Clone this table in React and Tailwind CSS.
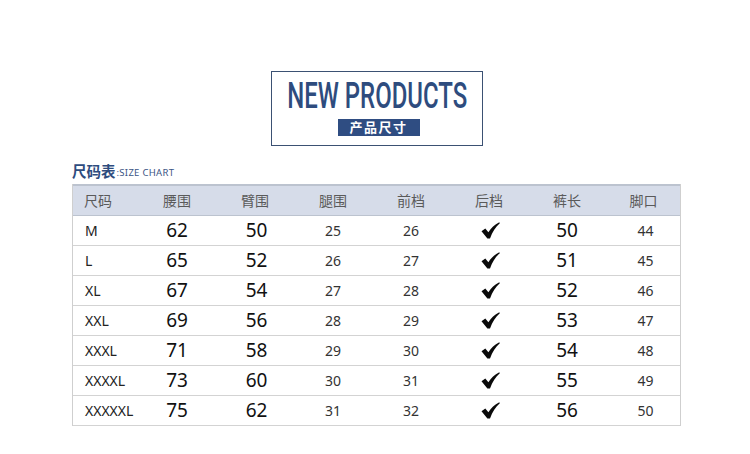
import React from "react";

const rows = [
  ["M", 62, 50, 25, 26, 50, 44],
  ["L", 65, 52, 26, 27, 51, 45],
  ["XL", 67, 54, 27, 28, 52, 46],
  ["XXL", 69, 56, 28, 29, 53, 47],
  ["XXXL", 71, 58, 29, 30, 54, 48],
  ["XXXXL", 73, 60, 30, 31, 55, 49],
  ["XXXXXL", 75, 62, 31, 32, 56, 50],
];

const heads = ["尺码", "腰围", "臂围", "腿围", "前档", "后档", "裤长", "脚口"];

const grid =
  "grid grid-cols-[65px_78px_78px_78px_78px_78px_78px_75px] items-center";

function Check() {
  return (
    <svg width="19" height="17" viewBox="0 0 19 17">
      <path
        d="M0.5 9.2 L4.3 6.6 L7.4 10.2 C10 6 13.6 2.6 18.3 0.2 L18.8 1.2 C14.6 4.8 11.4 9.6 9 16.6 L6.4 16.6 Z"
        fill="#0a0a0a"
      />
    </svg>
  );
}

export default function App() {
  return (
    <div
      className="w-[750px] h-[454px] bg-white overflow-hidden"
      style={{ fontFamily: '"Noto Sans", "Noto Sans CJK SC", sans-serif' }}
    >
      <div className="pt-[71px] pl-[271px]">
        <div className="w-[212px] h-[75px] border-[1.5px] border-[#3b5173] flex flex-col items-center">
          <div className="h-[42px] flex items-end justify-center w-full">
            <span
              className="inline-block text-[36px] leading-[36px] font-medium text-[#2e4c7e] scale-x-[0.665] whitespace-nowrap"
              style={{ fontFamily: "Roboto, sans-serif" }}
            >
              NEW PRODUCTS
            </span>
          </div>
          <div className="mt-[5px] ml-[3px] w-[82px] h-[17px] bg-[#2f4d82] flex items-center justify-center text-white text-[13px] font-bold tracking-[1.5px] leading-none">
            产品尺寸
          </div>
        </div>
      </div>

      <div className="ml-[72px] mt-[18px] flex items-end h-[14px]">
        <span className="text-[14.5px] leading-none font-bold text-[#2e4c7e]">
          尺码表
        </span>
        <span className="text-[9.5px] leading-none text-[#3b5584] ml-[1px] mb-[1px] tracking-[0.3px]">
          :SIZE CHART
        </span>
      </div>

      <div className="ml-[72px] mt-[6px] w-[609px] border-x border-[#cfcfcf]">
        <div
          className={`${grid} h-[32px] bg-[#d6dce9] border-t-2 border-b border-[#bcc3cf] text-[14px] text-[#5a5a5a]`}
        >
          {heads.map((h, i) => (
            <div key={h} className={i === 0 ? "pl-[11px]" : "text-center"}>
              {h}
            </div>
          ))}
        </div>
        {rows.map((r) => (
          <div
            key={r[0]}
            className={`${grid} h-[30px] border-b border-[#d3d3d3]`}
          >
            <div className="pl-[12px] text-[14px] text-[#222]">{r[0]}</div>
            <div className="text-center text-[19px] text-[#111] leading-none">
              {r[1]}
            </div>
            <div className="text-center text-[19px] text-[#111] leading-none pl-[3px]">
              {r[2]}
            </div>
            <div className="text-center text-[14px] text-[#333]">{r[3]}</div>
            <div className="text-center text-[14px] text-[#333]">{r[4]}</div>
            <div className="flex justify-center pl-[2px]">
              <Check />
            </div>
            <div className="text-center text-[19px] text-[#111] leading-none">
              {r[5]}
            </div>
            <div className="text-center text-[14px] text-[#333] pl-[4px]">
              {r[6]}
            </div>
          </div>
        ))}
      </div>
    </div>
  );
}
